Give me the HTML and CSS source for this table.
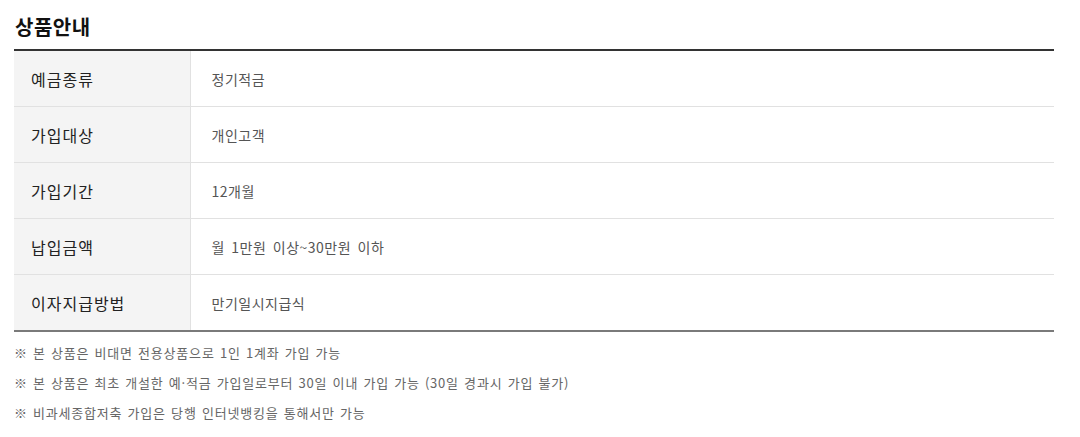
FILE: index.html
```html
<!DOCTYPE html>
<html lang="ko">
<head>
<meta charset="utf-8">
<title>상품안내</title>
<link rel="stylesheet" href="styles.css">
</head>
<body>
<div class="wrap">
  <h2 class="title">상품안내</h2>
  <table class="info">
    <tbody>
      <tr><th>예금종류</th><td>정기적금</td></tr>
      <tr><th>가입대상</th><td>개인고객</td></tr>
      <tr><th>가입기간</th><td>12개월</td></tr>
      <tr><th>납입금액</th><td>월 1만원 이상~30만원 이하</td></tr>
      <tr><th>이자지급방법</th><td>만기일시지급식</td></tr>
    </tbody>
  </table>
  <ul class="notes">
    <li>※ 본 상품은 비대면 전용상품으로 1인 1계좌 가입 가능</li>
    <li>※ 본 상품은 최초 개설한 예·적금 가입일로부터 30일 이내 가입 가능 (30일 경과시 가입 불가)</li>
    <li>※ 비과세종합저축 가입은 당행 인터넷뱅킹을 통해서만 가능</li>
  </ul>
</div>
</body>
</html>
```

FILE: styles.css
```css
html, body {
  margin: 0;
  padding: 0;
  background: #fff;
}
body {
  font-family: "Noto Sans CJK KR", "Noto Sans", sans-serif;
  color: #222;
}
.wrap {
  width: 1040px;
  margin-left: 14px;
  padding-top: 12px;
}
.title {
  margin: 0 0 8px 1px;
  font-size: 20px;
  line-height: 29px;
  font-weight: 700;
  color: #111;
  letter-spacing: 0.5px;
}
.info {
  width: 100%;
  border-collapse: collapse;
  border-top: 2px solid #333;
  border-bottom: 2px solid #7a7a7a;
}
.info th,
.info td {
  height: 55px;
  padding: 0;
  border-bottom: 1px solid #e1e1e1;
  vertical-align: middle;
  text-align: left;
}
.info tr:last-child th,
.info tr:last-child td {
  border-bottom: none;
}
.info th {
  width: 176px;
  padding-left: 17px;
  box-sizing: border-box;
  background: #f4f4f4;
  border-right: 1px solid #e1e1e1;
  font-size: 16px;
  font-weight: 400;
  color: #222;
  line-height: 20px;
  letter-spacing: 1px;
}
.info td {
  padding-left: 21px;
  font-size: 14px;
  color: #555;
  line-height: 20px;
  letter-spacing: 0.5px;
  word-spacing: 2px;
}
.notes {
  list-style: none;
  margin: 6px 0 0;
  padding: 0;
}
.notes li {
  font-size: 13px;
  line-height: 30px;
  color: #666;
  letter-spacing: 0.8px;
  word-spacing: 0.8px;
}
```
